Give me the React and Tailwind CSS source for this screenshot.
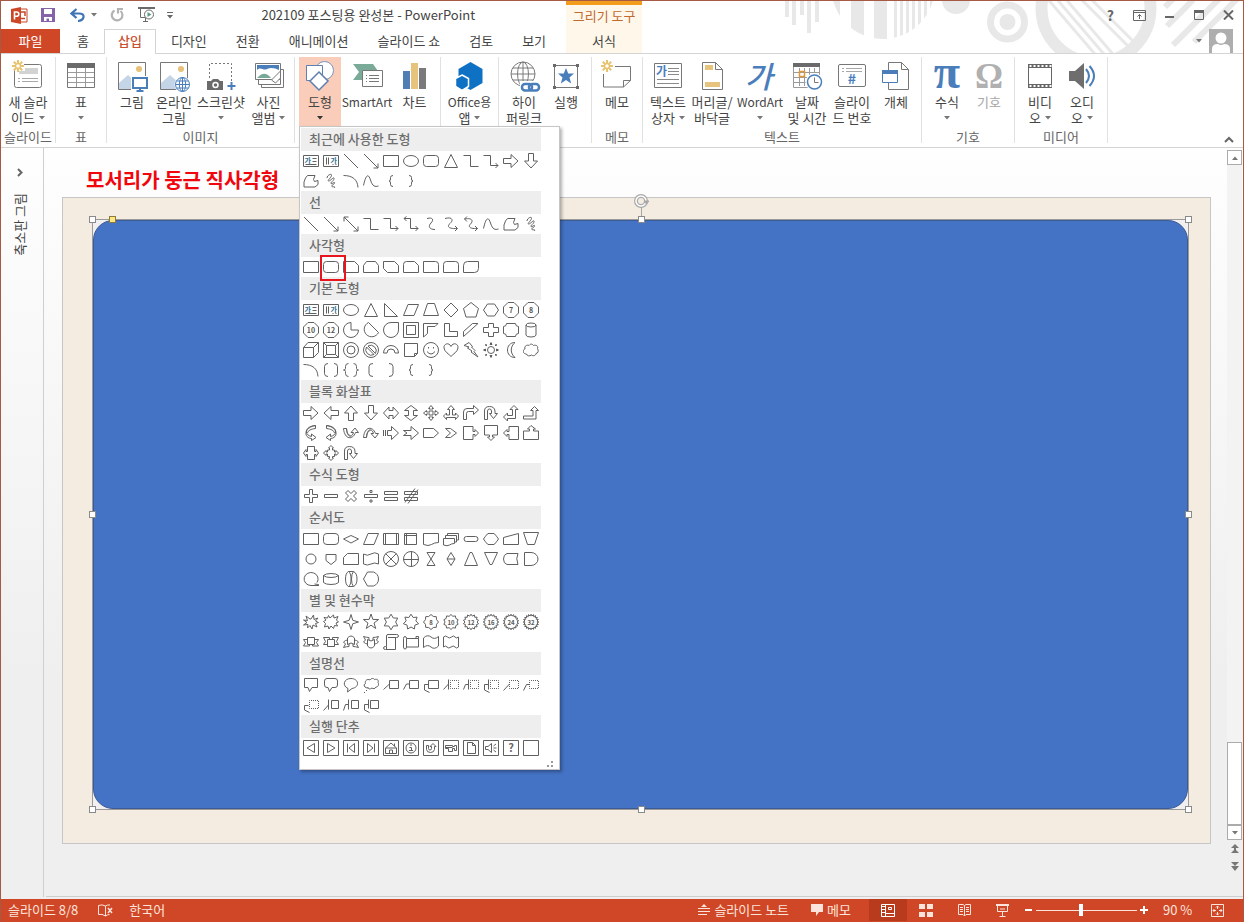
import React, { useState } from 'react';
import clsx from 'clsx';

const BLUE = '#4a7ebb';

/* ---------- shape glyphs, drawn on a 16 x 16 grid ---------- */

const Digits = ({ children, size = 7 }) => (
  <text x="8" y="10.5" textAnchor="middle" fontSize={size} fontWeight="700" fill="#555" stroke="none">
    {children}
  </text>
);

const Framed = ({ children }) => (
  <>
    <path d="M.5 .5h15v15h-15z" />
    {children}
  </>
);

const Dotted = ({ d }) => <path d={d} strokeDasharray="1 1" strokeDashoffset="0.5" />;

const OCTAGON = 'M5 .5h6L15.5 5v6L11 15.5H5L.5 11V5z';

const starPath = (points, outer, inner) => {
  const steps = [];
  for (let i = 0; i < points * 2; i += 1) {
    const r = i % 2 ? inner : outer;
    const a = (Math.PI * i) / points - Math.PI / 2;
    steps.push(`${(8 + r * Math.cos(a)).toFixed(2)} ${(8 + r * Math.sin(a)).toFixed(2)}`);
  }
  return `M${steps.join('L')}z`;
};

const shapes = {
  textBox: (
    <>
      <path d="M.5 2.5h15v11h-15zM9.5 5.5h4M9.5 8.5h4M2.5 11.5h11" />
      <text x="1.5" y="9.5" fontSize="7" fontWeight="700" fill="#2f6f8f" stroke="none">가</text>
    </>
  ),
  textBoxV: (
    <>
      <path d="M.5 2.5h15v11h-15zM3.5 4.5v7M5.5 4.5v7M9.5 11.5h1M12.5 11.5h1" />
      <text x="7.5" y="9.5" fontSize="7" fontWeight="700" fill="#2f6f8f" stroke="none">가</text>
    </>
  ),
  line: 'M1 1L15 15',
  arrow: 'M1 1L15 15M15 10.5V15h-4.5',
  arrow2: 'M1 1L15 15M15 10.5V15h-4.5M5.5 1H1v4.5',
  rect: 'M.5 2.5h15v11h-15z',
  oval: 'M.5 8a7.5 5.5 0 1 0 15 0a7.5 5.5 0 1 0 -15 0z',
  round: 'M3.5 2.5h9q3 0 3 3v5q0 3 -3 3h-9q-3 0 -3 -3v-5q0 -3 3 -3z',
  triangle: 'M8 1.5L14.5 14.5H1.5z',
  elbow: 'M.5 2.5h7v11h8',
  elbowArrow: 'M.5 2.5h7v10h7.5M12.5 10L15 12.5L12.5 15',
  elbowArrow2: 'M1 2.5h6.5v10h7.5M12.5 10L15 12.5L12.5 15M3.5 .5L1 2.5L3.5 5',
  curve: 'M4 2.5c6 -1.500 7 1.500 4 4.500s-2 6.500 4 6.500',
  curveArrow: 'M2 2.500c7 -2 9 1.500 5 5s0 5.500 7 5M12 10L14.500 12.500L12 15',
  curveArrow2: 'M1.500 3c8 -1.500 9 2 6 5s0 5 7 4.500M12 10L14.500 12.500L12 15M4 .500L1.500 3L4 5.500',
  rightArrow: 'M.5 5.500h7.500v-4l7 6.500l-7 6.500v-4H.5z',
  leftArrow: 'M15.500 5.500H8v-4L1 8l7 6.500v-4h7.500z',
  upArrow: 'M5.500 15.500V8h-4L8 1l6.500 7h-4v7.500z',
  downArrow: 'M5.500 .5V8h-4L8 15l6.500 -7h-4V.5z',
  freeform: 'M2.500 5l2 -2.500h7.500l-1.500 4l1 2l3.500 -1v4l-3 2.500H1V9z',
  scribble: 'M4 5c0 -3 5 -5 4.500 -2.500S4 7.500 5.500 8S11 3 11 5.500S7 9.500 8 10.500s4 -2.500 3.500 -.5S7.500 12.500 9 13.500s3 -1 2.500 1.500',
  arc: 'M.5 2.500c9 0 14 4 14.500 12',
  wave: 'M.5 12.500C3 1 5.500 .5 7.500 7s4.500 7 8 6',
  braceL: 'M10 2.500q-2.500 0 -2.500 2v1.500q0 2 -1.500 2q1.500 0 1.500 2v1.500q0 2 2.500 2',
  braceR: 'M6 2.500q2.500 0 2.500 2v1.500q0 2 1.500 2q-1.500 0 -1.500 2v1.500q0 2 -2.500 2',
  snip1: 'M.5 2.500h11l4 4v7h-15z',
  snip2: 'M3.500 2.500h9l3 4v7H.5v-7z',
  snipDiag: 'M.5 2.500h11l4 4v7h-11l-4 -4z',
  snipRound: 'M3.500 2.500h8l4 4v7H.5v-8q0 -3 3 -3z',
  round1: 'M.5 2.500h12q3 0 3 3v8h-15z',
  round2: 'M3.500 2.500h9q3 0 3 3v8H.5v-8q0 -3 3 -3z',
  roundDiag: 'M4.500 2.500h11v7q0 4 -4 4H.5v-7q0 -4 4 -4z',
  rightTri: 'M1.500 1.500v13h13z',
  parallelogram: 'M5 2.500h10.500l-4.500 11H.5z',
  trapezoid: 'M4.500 1.500h7l4 12H.5z',
  diamond: 'M8 1L15 8L8 15L1 8z',
  pentagon: 'M8 .5L15.500 6.500L13 15H3L.5 6.500z',
  hexagon: 'M4.500 2h7l4 6l-4 6h-7L.5 8z',
  hept: <><path d={OCTAGON} /><Digits>7</Digits></>,
  oct: <><path d={OCTAGON} /><Digits>8</Digits></>,
  deca: <><path d={OCTAGON} /><Digits>10</Digits></>,
  dodeca: <><path d={OCTAGON} /><Digits>12</Digits></>,
  pie: 'M8 .5a7.500 7.500 0 1 0 7.500 7.500H8z',
  chord: 'M5.500 .5L15.500 10.500A7.500 7.500 0 1 1 5.500 .5z',
  teardrop: 'M15.500 .5v7.500a7.500 7.500 0 1 1 -7.500 -7.500z',
  frame: 'M.5 .5h15v15h-15zM3.500 3.500h9v9h-9z',
  halfFrame: 'M.5 1.500h14.500l-3 3H4.500v7l-4 3.500z',
  lShape: 'M1.500 1.500h5v8h8v5h-13z',
  stripe: 'M.5 9.500L9.500 1.500h5.500L.5 14.500z',
  cross: 'M5.500 1.500h5v4h5v5h-5v4h-5v-4h-5v-5h5z',
  plaque: 'M3.500 1.500h9q0 3 3 3v7q-3 0 -3 3h-9q0 -3 -3 -3v-7q3 0 3 -3z',
  can: 'M3 3v10q0 2 5 2t5 -2V3q0 -2 -5 -2t-5 2q0 2 5 2t5 -2',
  cube: 'M.5 5.500h10v10h-10zM.5 5.500l4.500 -5h10.500l-5 5M15.500 .5v10l-5 5',
  bevel: 'M.5 .5h15v15h-15zM3.500 3.500h9v9h-9zM.5 .5l3 3M15.500 .5l-3 3M.5 15.500l3 -3M15.500 15.500l-3 -3',
  donut: 'M.5 8a7.500 7.500 0 1 0 15 0a7.500 7.500 0 1 0 -15 0zM4 8a4 4 0 1 0 8 0a4 4 0 1 0 -8 0z',
  noSymbol: 'M.5 8a7.500 7.500 0 1 0 15 0a7.500 7.500 0 1 0 -15 0zM5 4l7.500 7.500a5.500 5.500 0 0 0 -7.500 -7.500zM3.500 5l7.500 7.500a5.500 5.500 0 0 1 -7.500 -7.500z',
  blockArc: 'M.5 11a7.500 7.500 0 0 1 15 0h-3.500a4 4 0 0 0 -8 0z',
  folded: 'M1.500 1.500h13v10l-3 3h-10zM14.500 11.500h-3v3',
  smile: 'M.5 8a7.500 7.500 0 1 0 15 0a7.500 7.500 0 1 0 -15 0zM4 9.500q4 5 8 0M5.500 5v1.500M10.500 5v1.500',
  heart: 'M8 4.500C6 0 .5 1.500 1 6c.5 4 5 6 7 8.500c2 -2.500 6.500 -4.500 7 -8.500c.5 -4.500 -5 -6 -7 -1.500z',
  bolt: 'M1 3.500L6 .5l3.500 4l-1 .5l3.500 3.500l-1 1l4 5.500l-7 -5l1 -1l-4.500 -3l1.500 -1z',
  sun: 'M4.500 8a3.500 3.500 0 1 0 7 0a3.500 3.500 0 1 0 -7 0zM7 2.500L8 .5l1 2zM7 13.500l1 2l1 -2zM2.500 7l-2 1l2 1zM13.500 7l2 1l-2 1zM2.500 2.500l1.500 .5l-1 1zM13.500 2.500l-1.500 .5l1 1zM2.500 13.500l1.500 -.5l-1 -1zM13.500 13.500l-1.500 -.5l1 -1z',
  moon: 'M12 .5c-10 0 -10 15 0 15c-5 -4 -5 -11 0 -15z',
  cloud: 'M3.500 12c-4 0 -4 -4.500 -1.500 -5c-1 -3 2 -4.500 4 -3.500c2 -2.500 4 -1 4.500 0c3 -1 5 1 4 3c1.500 2 .5 5 -1.500 5c0 2 -3 3 -4.500 1.500c-2 1.500 -4.500 1 -5 -1z',
  brackets: 'M5 1.500q-3.500 0 -3.500 3v7q0 3 3.500 3M11 1.500q3.500 0 3.500 3v7q0 3 -3.500 3',
  braces: 'M5.500 1.500q-3 0 -3 3v2q0 1.500 -2 1.500q2 0 2 1.500v2q0 3 3 3M10.500 1.500q3 0 3 3v2q0 1.500 2 1.500q-2 0 -2 1.500v2q0 3 -3 3',
  bracketL: 'M10 1.500q-4 0 -4 3v7q0 3 4 3',
  bracketR: 'M6 1.500q4 0 4 3v7q0 3 -4 3',
  leftRight: 'M.5 8L6 2v3.500h4V2l5.500 6l-5.500 6v-3.500H6V14z',
  upDown: 'M8 .5L14.500 5.500h-4v5h4L8 15.500L1.500 10.500h4v-5h-4z',
  quad: 'M8 .5l2.500 3h-1.500v3.500h3.500v-1.500l3 2.500l-3 2.500v-1.500h-3.500v3.500h1.500l-2.500 3l-2.500 -3h1.500v-3.500h-3.500v1.500l-3 -2.500l3 -2.500v1.500h3.500v-3.500h-1.500z',
  threeWay: 'M8 .5l3.500 4h-2v5.500h3v-2l3 3l-3 3.500v-2h-9v2l-3 -3.500l3 -3v2h3V4.500h-2z',
  bentArrow: 'M.5 14.500V7q0 -3.500 3.500 -3.500h6.500v-3l5 4.500l-5 4.500v-3H5.500q-2 0 -2 2v6z',
  uTurn: 'M1.500 14.500V6q0 -4.500 5 -4.500t5.500 4.500v2.500h2.500l-4 5l-4 -5h2V6q0 -2 -2 -2t-2 2v8.500z',
  leftUp: 'M11 .5l4 4h-2.500v9h-8v2.500l-4 -4l4 -4v2.500h5v-6H7z',
  bentUp: 'M11.500 1.500l4 4h-2.500v8.500H.5v-3h9.500V5.500H7.500z',
  curvedRight: 'M12.500 .5C1 1.500 1 10 8.500 11.500V9l4.500 3.500l-4.500 3v-2C.5 13 .5 2.500 12.500 .5zM12.500 .5v3C8 4 5 5.500 4.500 8',
  curvedLeft: 'M3.500 .5C15 1.500 15 10 7.500 11.500V9L3 12.500l4.500 3v-2C15.500 13 15.500 2.500 3.500 .5zM3.500 .5v3C8 4 11 5.500 11.500 8',
  curvedUp: 'M.5 3.500h3C4 8 5 10 7.500 10.500M.5 3.500C1.500 15 10 15 12.500 7.500h3L12 3L8 7.500h2.500C9 13 4 13 3.500 3.500',
  curvedDown: 'M.5 12.500h3C4 8 5 6 7.500 5.500M.5 12.500C1.500 1 10 1 12.500 8.500h3L12 13L8 8.500h2.500C9 3 4 3 3.500 12.500',
  striped: 'M.5 5v6M2.500 5v6M4.500 5.500h4v-4l7 6.500l-7 6.500v-4h-4z',
  notched: 'M.5 5.500h7.500v-4l7.500 6.500l-7.500 6.500v-4H.5L4 8z',
  homePlate: 'M.5 3.500h10l5 4.500l-5 4.500H.5z',
  chevron: 'M2.500 3.500h5l6 4.500l-6 4.500h-5l5 -4.500z',
  calloutRight: 'M.5 1.500h9.500v5h2v-2l3.500 3.500l-3.500 3.500v-2h-2v5H.5z',
  calloutDown: 'M1.500 .5h13v9.500h-5v2h2l-3.500 3.500l-3.500 -3.500h2v-2h-5z',
  calloutLeft: 'M15.500 1.500H6v5H4v-2L.5 8L4 11.500v-2h2v5h9.500z',
  calloutUp: 'M.5 14.500h15V6h-5V4h2L8 .5L4.500 4h2v2h-6z',
  calloutLR: 'M4.500 1.500h7v5h1.500v-2l2.500 3.500l-2.500 3.500v-2h-1.500v5h-7v-5H3v2L.5 8L3 4.500v2h1.500z',
  calloutQuad: 'M8 .5l2.500 2.500h-1v2h2v2h1.500v-1.500L15.500 8L13 10.500V9h-1.500v2.500h-2v1.500h1L8 15.500L5.500 13h1v-1.500h-2V9H3v1.500L.5 8L3 5.500V7h1.500V5h2V3h-1z',
  mathPlus: 'M6.500 1.500h3v5h5v3h-5v5h-3v-5h-5v-3h5z',
  mathMinus: 'M1.500 6.500h13v3h-13z',
  mathTimes: 'M5 2.500L8 5.500l3 -3L13.500 5l-3 3l3 3L11 13.500l-3 -3l-3 3L2.500 11l3 -3l-3 -3z',
  mathDivide: 'M1.500 6.500h13v3h-13zM7 2.500h2v2H7zM7 12h2v2H7z',
  mathEqual: 'M1.500 3.500h13v3h-13zM1.500 9.500h13v3h-13z',
  mathNotEqual: 'M1.500 3.500h13v3h-13zM1.500 9.500h13v3h-13zM12 .5L2 14.500M15 1.500L5 15.500',
  flowAlt: 'M4 2.500h8q3.500 0 3.500 3v5q0 3 -3.500 3H4q-3.500 0 -3.500 -3v-5q0 -3 3.500 -3z',
  decision: 'M8 4.500L15.500 8L8 12L.5 8z',
  predefined: 'M.5 2.500h15v11h-15zM2.500 2.500v11M13.500 2.500v11',
  internal: 'M1.500 2.500h12v11h-12zM1.500 4.500h12M3.500 2.500v11',
  document: 'M.5 2.500h15v9q-4 0 -7 2t-8 0z',
  multiDoc: 'M.5 7.500h11v5q-3 0 -5 1.500t-6 0zM2.500 7V4.500h11v6.500H12M4.500 4V2.500h11v6.500H14',
  terminator: 'M3.500 5.500h9a2.500 2.500 0 0 1 0 5h-9a2.500 2.500 0 0 1 0 -5z',
  preparation: 'M5 2.500h6q1 .5 4.500 5.500q-3.500 5 -4.500 5.500H5q-1 -.5 -4.500 -5.500q3.500 -5 4.500 -5.500z',
  manualInput: 'M.5 6.500L15.500 2.500v11H.5z',
  manualOp: 'M.5 1.500h15l-4 12h-7z',
  connector: 'M3 8a5 5 0 1 0 10 0a5 5 0 1 0 -10 0z',
  offPage: 'M3 3.500h10v6l-5 4l-5 -4z',
  card: 'M4.500 2.500h11v11H.5v-7z',
  tape: 'M.5 3q4 2.500 7.500 0t7.500 0v10q-4 -2 -7.500 0t-7.500 0z',
  summing: 'M.5 8a7.500 7.500 0 1 0 15 0a7.500 7.500 0 1 0 -15 0zM2.500 2.500l11 11M13.500 2.500l-11 11',
  orJoin: 'M.5 8a7.500 7.500 0 1 0 15 0a7.500 7.500 0 1 0 -15 0zM.5 8.500h15M8.500 .5v15',
  collate: 'M4 1.500h8L4 14.500h8z',
  sort: 'M8 1.500l4 6.500l-4 6.500L4 8zM4 8h8',
  extract: 'M7 1.500h2l5.500 13h-13z',
  merge: 'M1.500 1.500h13l-5.500 12H7z',
  stored: 'M4 2.500h11q-2.500 5 0 11H4q-3.500 -1 -3.500 -5.500T4 2.500z',
  delay: 'M1.500 1.500H8a7 6.500 0 0 1 0 13H1.500z',
  seqAccess: 'M15.500 14.500H8a7 6.500 0 1 1 6 -3M11.500 13l4 .500v1.500',
  magDisk: 'M.5 4.500v7q2 2 7.500 2t7.500 -2v-7q-2 -2 -7.500 -2t-7.500 2q2 2 7.500 2t7.500 -2',
  directAccess: 'M5.500 .5h5q3.500 1.500 3.500 7.500t-3.500 7.500h-5Q2.500 14 2.500 8T5.500 .5q2.500 1.500 2.500 7.500t-2.500 7.500M10.500 .5q-2 2 -2 7.500t2 7.500',
  display: 'M4.500 1h6q5 2 5 7t-5 7h-6L.5 8z',
  burst1: 'M8 5l2.500 -4l.5 4.500l4 -1.500l-2.500 3l3 1.500l-3 1l1.500 3.500l-4 -2L9 15l-2 -3.500L4.500 14l.5 -3.500l-4.500 .5L4 8.500L.5 6l4 .5L3 2l4 3z',
  burst2: 'M7 4l3.500 -3l.5 3l4 -1.500l-1.500 3.500l2 2l-2.500 1l1.500 3l-3 -.5l-1 3l-2.500 -2.500L6 15l-1 -3l-3.500 1l1 -3.500l-2 -2L3 6L1 3.500l3.500 .5L5.500 1.500z',
  star4: starPath(4, 7.5, 2.5),
  star5: starPath(5, 8, 3.2),
  star6: starPath(6, 7.8, 4.6),
  star7: starPath(7, 7.8, 5),
  star8: <><path d={starPath(8, 7.5, 6)} /><Digits size={6}>8</Digits></>,
  star10: <><path d={starPath(10, 7.5, 6)} /><Digits size={6}>10</Digits></>,
  star12: <><path d={starPath(14, 7.8, 6)} /><Digits size={6}>12</Digits></>,
  star16: <><path d={starPath(16, 7.8, 6)} /><Digits size={6}>16</Digits></>,
  star24: <><path d={starPath(18, 7.8, 6)} /><Digits size={6}>24</Digits></>,
  star32: <><path d={starPath(20, 7.8, 6)} /><Digits size={6}>32</Digits></>,
  ribbonUp: 'M4.500 3.500h7v7h-7zM4.500 5.500h-4l2 3l-2 3.500h6v-1.500M11.500 5.500h4l-2 3l2 3.500h-6v-1.500',
  ribbonDown: 'M4.500 5.500h7v7h-7zM4.500 10.500h-4l2 -3l-2 -4h6v2M11.500 10.500h4l-2 -3l2 -4h-6v2',
  curvedRibbonUp: 'M4.500 10.500V4q3.500 -4 7 0v6.500q-3.500 -3 -7 0zM4.500 6q-2 0 -4 2l2 2l-2 3.500q3 -1 5.500 -1v-2.500M11.500 6q2 0 4 2l-2 2l2 3.500q-3 -1 -5.500 -1v-2.500',
  curvedRibbonDown: 'M4.500 5.500V12q3.500 4 7 0V5.500q-3.500 3 -7 0zM4.500 10q-2 0 -4 -2l2 -2l-2 -3.500q3 1 5.500 1v2.500M11.500 10q2 0 4 -2l-2 -2l2 -3.500q-3 1 -5.500 1v2.500',
  vScroll: 'M4.500 .5h9q2 0 2 1.500t-2 1.500h-1v12h-10q-2 0 -2 -1.500t2 -1.500h1V2q0 -1.500 1.500 -1.500M5 3.500h8M3.500 12.500v3',
  hScroll: 'M.5 4.500q0 -2 1.500 -2t1.500 2h12v8.500h-12q0 2 -1.500 2T.5 13zM3.500 4.500v8.500M13 4.500v-2h2.500v2',
  waveShape: 'M.5 4q4 -4 7.500 -1t7.500 -.5v9.500q-4 4 -7.500 1t-7.500 .5z',
  doubleWave: 'M.5 3q2.500 -2 4 0t4 0t3.500 0t3.500 0v10q-2 2 -3.500 0t-4 0t-4 0t-3.500 0z',
  rectCallout: 'M1.500 1.500h13v9H9l-2.500 4L5 10.500H1.500z',
  roundCallout: 'M4 1.500h8q2.500 0 2.500 2.500v4q0 2.500 -2.500 2.500H9L6.500 14.500L5 10.500H4Q1.500 10.500 1.500 8V4Q1.500 1.500 4 1.500z',
  ovalCallout: 'M4.500 15l.5 -3.500C-1 9 .5 1.500 8 1.500s9.500 8.500 1 10z',
  cloudCallout: 'M5 11c-4 0 -5 -3.500 -2.500 -4.500c-1 -3 2 -5 4.500 -3.500c2 -2.500 4 -1.500 4.500 -.5c3 -1 4.500 1 3.500 3c1.500 2 0 4.500 -2 4.500c-1 2 -3 2 -4 1c-2 1.500 -4 1 -4 -.5zM3 13.500h1M1 15.500h1',
  line1: 'M6.500 3.500h9v8h-9zM6.500 7L.5 12.500',
  line2: 'M6.500 3.500h9v8h-9zM6.500 7h-3L.5 12.500',
  line3: 'M5.500 3.500h10v8h-10zM5.500 7.500h-4v5.500l5 2.500',
  accent1: <><Dotted d="M7.500 3.500h8v8h-8z" /><path d="M5.500 2.500v10M5.500 7L.5 12.500" /></>,
  accent2: <><Dotted d="M7.500 3.500h8v8h-8z" /><path d="M5.500 2.500v10M5.500 7.500h-3L.5 12.500" /></>,
  accent3: <><Dotted d="M7.500 3.500h8v8h-8z" /><path d="M5.500 2.500v10M5.500 7.500h-4v5.500l5 2.500" /></>,
  plain1: <><Dotted d="M6.500 3.500h9v8h-9z" /><path d="M6.500 7L.5 13.500" /></>,
  plain2: <><Dotted d="M6.500 3.500h9v8h-9z" /><path d="M6.500 7.500h-3L.5 13.500" /></>,
  plain3: <><Dotted d="M6.500 3.500h9v8h-9z" /><path d="M5.500 8.500h-4v4.500l5 2.500" /></>,
  bar1: 'M8.500 3.500h7v8h-7zM5.500 2.500v10M5.500 8L.5 13.500',
  bar2: 'M8.500 3.500h7v8h-7zM5.500 2.500v10M5.500 7.500h-3l-2 6',
  bar3: 'M7.500 3.500h8v8h-8zM5.500 2.500v9M5.500 7.500h-4v5.500l5 2.500',
  actBack: <Framed><path d="M11.500 3.500v9L4 8z" /></Framed>,
  actNext: <Framed><path d="M4.500 3.500v9L12 8z" /></Framed>,
  actStart: <Framed><path d="M11.500 3.500v9L6 8zM4.500 3.500v9" /></Framed>,
  actEnd: <Framed><path d="M4.500 3.500v9L10 8zM11.500 3.500v9" /></Framed>,
  actHome: <Framed><path d="M2.500 8L8 3l5.500 5v5.500h-11zM2.500 8h11M6.500 13v-3h3v3M11.500 6V3.500" /></Framed>,
  actInfo: (
    <Framed>
      <path d="M3 8a5 5 0 1 0 10 0a5 5 0 1 0 -10 0z" />
      <path d="M7 5h2M6.500 7.500h2v3M6 10.500h4" />
    </Framed>
  ),
  actReturn: <Framed><path d="M3.500 5.500h2v3q0 1.500 1.500 1.500t1.500 -1.500v-2h-1.500l3 -3l3 3h-1.500v3q-.5 3 -4 3t-4 -3z" /></Framed>,
  actMovie: <Framed><path d="M2.500 5.500h7v1h2v-1h2v5h-2v-2h-2v3h-4v-3h-3zM2.500 7.500h7" /></Framed>,
  actDoc: <Framed><path d="M4.500 2.500h5l3 3v8h-8zM9.500 2.500v3h3" /></Framed>,
  actSound: <Framed><path d="M2.500 6.500h2.500l3.500 -3v9L5 9.500H2.500zM10.500 6l2.500 -2M10.500 8h3M10.500 10l2.500 2" /></Framed>,
  actHelp: (
    <Framed>
      <text x="8" y="12" textAnchor="middle" fontSize="11" fontWeight="700" fill="#666" stroke="none">?</text>
    </Framed>
  ),
  actBlank: <Framed />,
};

const sections = [
  { title: '최근에 사용한 도형', items: 'textBox textBoxV line arrow rect oval round triangle elbow elbowArrow rightArrow downArrow freeform scribble arc wave braceL braceR' },
  { title: '선', items: 'line arrow arrow2 elbow elbowArrow elbowArrow2 curve curveArrow curveArrow2 wave freeform scribble' },
  { title: '사각형', items: 'rect round snip1 snip2 snipDiag snipRound round1 round2 roundDiag', marked: 'round' },
  { title: '기본 도형', items: 'textBox textBoxV oval triangle rightTri parallelogram trapezoid diamond pentagon hexagon hept oct deca dodeca pie chord teardrop frame halfFrame lShape stripe cross plaque can cube bevel donut noSymbol blockArc folded smile heart bolt sun moon cloud arc brackets braces bracketL bracketR braceL braceR' },
  { title: '블록 화살표', items: 'rightArrow leftArrow upArrow downArrow leftRight upDown quad threeWay bentArrow uTurn leftUp bentUp curvedRight curvedLeft curvedUp curvedDown striped notched homePlate chevron calloutRight calloutDown calloutLeft calloutUp calloutLR calloutQuad uTurn' },
  { title: '수식 도형', items: 'mathPlus mathMinus mathTimes mathDivide mathEqual mathNotEqual' },
  { title: '순서도', items: 'rect flowAlt decision parallelogram predefined internal document multiDoc terminator preparation manualInput manualOp connector offPage card tape summing orJoin collate sort extract merge stored delay seqAccess magDisk directAccess display' },
  { title: '별 및 현수막', items: 'burst1 burst2 star4 star5 star6 star7 star8 star10 star12 star16 star24 star32 ribbonUp ribbonDown curvedRibbonUp curvedRibbonDown vScroll hScroll waveShape doubleWave' },
  { title: '설명선', items: 'rectCallout roundCallout ovalCallout cloudCallout line1 line2 line3 accent1 accent2 accent3 plain1 plain2 plain3 bar1 bar2 bar3' },
  { title: '실행 단추', items: 'actBack actNext actStart actEnd actHome actInfo actReturn actMovie actDoc actSound actHelp actBlank' },
];

function ShapeIcon({ name }) {
  const glyph = shapes[name];
  return (
    <svg width="16" height="16" viewBox="0 0 16 16" fill="none" stroke="#606060" strokeWidth="1">
      {typeof glyph === 'string' ? <path d={glyph} /> : glyph}
    </svg>
  );
}

function ShapeMenu() {
  return (
    <div className="absolute left-0 top-full z-20 w-[261px] -mt-px border border-[#c6c6c6] bg-white p-px text-left shadow-[2px_2px_3px_rgba(0,0,0,0.3)]">
      {sections.map(({ title, items, marked }) => (
        <section key={title} className="w-[240px]">
          <h3 className="h-[23px] bg-[#eeeeee] pl-2 text-[13px] font-medium leading-[22px] text-[#6e6e6e]">{title}</h3>
          <div className="grid grid-cols-12">
            {items.split(' ').map((name) => (
              <button key={name} type="button" aria-label={name} className="relative flex h-5 items-center justify-center">
                <ShapeIcon name={name} />
                {name === marked && (
                  <span className="absolute -left-px -top-[2px] z-10 h-[26px] w-[26px] border-2 border-[#e8161c]" />
                )}
              </button>
            ))}
          </div>
        </section>
      ))}
      <div className="flex h-[10px] items-end justify-end pr-1">
        <svg width="8" height="8" viewBox="0 0 8 8" fill="#9a9a9a">
          <path d="M5 1h2v2H5zM1 5h2v2H1zM5 5h2v2H5z" />
        </svg>
      </div>
    </div>
  );
}

/* ---------- ribbon icons, drawn on a 32 x 32 grid ---------- */

const Spark = () => (
  <g stroke="#e8c36f" strokeWidth="2" fill="none">
    <circle cx="6" cy="6" r="2.5" strokeWidth="1.500" />
    <path d="M6 0v3M6 9v3M0 6h3M9 6h3M1.800 1.800l2 2M8.200 8.200l2 2M10.200 1.800l-2 2M3.800 8.200l-2 2" />
  </g>
);

const Photo = () => (
  <>
    <path d="M2.500 2.500h27v27h-27z" fill="#fff" />
    <path d="M3 29v-6l9 -8l9 8l4 6z" fill="#c5d5e8" stroke="none" />
    <circle cx="23" cy="9" r="3" fill="#e8c078" stroke="none" />
  </>
);

const Globe = ({ cx, cy, r, stroke }) => (
  <g stroke={stroke} fill="none">
    <circle cx={cx} cy={cy} r={r} fill="#fff" />
    <ellipse cx={cx} cy={cy} rx={r / 2.2} ry={r} />
    <path d={`M${cx} ${cy - r}v${r * 2}M${cx - r} ${cy}h${r * 2}M${cx - r * 0.85} ${cy - r / 2}h${r * 1.7}M${cx - r * 0.85} ${cy + r / 2}h${r * 1.7}`} />
  </g>
);

const ribbonIcons = {
  newSlide: (
    <>
      <rect x="2.500" y="4.500" width="27" height="23" rx="2" fill="#fff" />
      <path d="M0 0h12v10H0z" fill="#fff" stroke="none" />
      <path d="M13 8h13v6H7v-3h6z" fill="#d3d3d3" stroke="none" />
      <path d="M6 18.500h2M10 18.500h16M6 21.500h2M10 21.500h16" stroke="#a8a8a8" />
      <Spark />
    </>
  ),
  table: (
    <>
      <path d="M2.500 3.500h27v24h-27z" fill="#fff" />
      <path d="M2 3h28v5H2z" fill="#6a6a6a" stroke="none" />
      <path d="M11.500 8v19M20.500 8v19M3 12.500h26M3 17.500h26M3 22.500h26" stroke="#9a9a9a" />
    </>
  ),
  picture: (
    <>
      <Photo />
      <path d="M15 16h17v16H15z" fill="#fff" stroke="none" />
      <path d="M17 18h14v10H17zM24 28v2.500M20.500 31h7" stroke={BLUE} strokeWidth="2" />
    </>
  ),
  onlinePicture: (
    <>
      <Photo />
      <circle cx="24.500" cy="24.500" r="8" fill="#fff" stroke="none" />
      <Globe cx={24.5} cy={24.5} r={7} stroke={BLUE} />
    </>
  ),
  screenshot: (
    <>
      <path d="M4.500 18V3.500h22V22" strokeDasharray="2 2" />
      <path d="M2 21h4l2 -2h5l2 2h3v9H2z" fill="#6a6a6a" stroke="none" />
      <circle cx="10.500" cy="25" r="2.500" stroke="#fff" strokeWidth="1.500" />
      <path d="M26.500 22v8M22.500 26h8" stroke={BLUE} strokeWidth="2" />
    </>
  ),
  album: (
    <>
      <path d="M8.500 9.500h22v18h-22z" fill="#fff" />
      <path d="M5.500 6.500h22v18h-22z" fill="#fff" />
      <path d="M2.500 3.500h25v16h-25z" fill="#fff" />
      <path d="M4 5h22v13H4z" fill={BLUE} stroke="none" />
      <path d="M4 10c4 -4 6 1 10 -1s8 -1 12 1v8H4z" fill="#fff" stroke="none" />
      <path d="M4 18c5 -5 9 -6 14 0z" fill="#77a898" stroke="none" />
      <path d="M18.500 20l9 -9v7l-5 5z" fill="#fff" />
    </>
  ),
  shapes: (
    <>
      <circle cx="20.500" cy="10.500" r="9" fill="#fff" stroke="#7b96bb" />
      <path d="M2.500 5.500h16v15h-16z" fill="#fff" stroke="#5f7fae" />
      <path d="M15 12l9 9l-9 9l-9 -9z" fill="#fff" stroke="#5f7fae" strokeWidth="1.500" />
    </>
  ),
  smartArt: (
    <>
      <path d="M2 4h20l5 7l-5 9H2l6 -8z" fill="#7aab98" stroke="none" />
      <path d="M11.500 10.500h20v16h-20z" fill="#fff" />
      <path d="M15 15.500h1M18 15.500h10M15 18.500h1M18 18.500h10M15 21.500h1M18 21.500h10" />
    </>
  ),
  chart: (
    <g stroke="none">
      <path d="M4 11h7v18H4z" fill="#4f7fb5" />
      <path d="M12 3h7v26h-7z" fill="#e6c47e" />
      <path d="M20 8h7v21h-7z" fill="#7a7a7a" />
    </g>
  ),
  office: (
    <>
      <path d="M16.500 2l12 7v14l-12 7l-12 -7V9z" fill="#0f71c4" stroke="none" />
      <path d="M8 15l6.500 3.500v8L8 30.500l-6.500 -4v-8z" fill="#0f71c4" stroke="#fff" strokeWidth="1.500" />
    </>
  ),
  hyperlink: (
    <>
      <Globe cx={15} cy={14} r={12} stroke="#7a7a7a" />
      <path d="M12 21h20v11H12z" fill="#fff" stroke="none" />
      <g stroke={BLUE} strokeWidth="2.500">
        <rect x="14" y="24" width="10" height="6.500" rx="3" />
        <rect x="21" y="24" width="10" height="6.500" rx="3" />
      </g>
    </>
  ),
  action: (
    <>
      <path d="M4.500 5.500h23v22h-23z" />
      <path d="M3 4h3v3H3zM26 4h3v3h-3zM3 26h3v3H3zM26 26h3v3h-3z" fill="#6a6a6a" stroke="none" />
      <path d="M16 8l2.200 5.500H24l-4.500 4l1.700 6L16 20l-5.200 3.500l1.700 -6L8 13.500h5.800z" fill={BLUE} stroke="none" />
    </>
  ),
  memo: (
    <>
      <path d="M14 6.500h15.500v14l-7 6.500h-20V14M29.500 20.500h-7V27" />
      <Spark />
    </>
  ),
  textBox: (
    <>
      <path d="M2.500 3.500h27v24h-27z" fill="#fff" />
      <path d="M16 8.500h11M16 11.500h11M16 14.500h11M5 19.500h22M5 23.500h22" stroke="#8a8a8a" />
      <text x="4" y="16" fontSize="12" fontWeight="700" fill={BLUE} stroke="none">가</text>
    </>
  ),
  headerFooter: (
    <>
      <path d="M6.500 2.500h13l7 7v20h-20zM19.500 2.500v7h7" fill="#fff" />
      <path d="M9 5h8v5H9zM9 22h15v5H9z" fill="#e6c47e" stroke="none" />
    </>
  ),
  wordArt: (
    <text x="1" y="28" fontSize="30" fontStyle="italic" fontWeight="500" fill={BLUE} stroke="none">가</text>
  ),
  dateTime: (
    <>
      <path d="M2.500 3.500h26v24h-26zM8.500 8v18M13.500 8v18M18.500 8v18M23.500 8v18M3 12.500h25M3 17.500h25M3 22.500h25" stroke="#9a9a9a" />
      <path d="M2 3h27v4H2z" fill="#6a6a6a" stroke="none" />
      <path d="M8.500 11.500h5v5h-5z" stroke="#e0963c" strokeWidth="1.500" />
      <circle cx="23.500" cy="22" r="9" fill="#fff" stroke="none" />
      <circle cx="23.500" cy="22" r="7" fill="#fff" stroke={BLUE} strokeWidth="1.500" />
      <path d="M23.500 17.500v5h4" />
    </>
  ),
  slideNumber: (
    <>
      <rect x="2.500" y="4.500" width="27" height="22" rx="1.500" fill="#fff" />
      <path d="M6 8.500h2M10 8.500h16M6 11.500h2M10 11.500h16" stroke="#a8a8a8" />
      <text x="16" y="24" textAnchor="middle" fontSize="14" fontWeight="700" fill={BLUE} stroke="none">#</text>
    </>
  ),
  object: (
    <>
      <path d="M8.500 2.500h13l7 7v20h-20zM21.500 2.500v7h7" fill="#fff" />
      <path d="M2.500 10.500h15v12h-15z" fill="#fff" stroke={BLUE} />
      <path d="M2 10h16v4H2z" fill={BLUE} stroke="none" />
    </>
  ),
  equation: (
    <text x="16" y="28" textAnchor="middle" fontSize="48" fontWeight="700" fill={BLUE} stroke="none" className="font-['Liberation_Serif',serif]">π</text>
  ),
  symbol: (
    <text x="16" y="28" textAnchor="middle" fontSize="35" fontWeight="700" fill="#b0b0b0" stroke="none" className="font-['Liberation_Serif',serif]">Ω</text>
  ),
  video: (
    <>
      <path d="M4 4h24v24H4z" fill="#666" stroke="none" />
      <path d="M5 8h22v16H5z" fill="#fff" stroke="none" />
      <path d="M5.500 6h22M5.500 26h22" stroke="#fff" strokeWidth="2" strokeDasharray="2 2" />
    </>
  ),
  audio: (
    <>
      <path d="M3 11h6l9 -8v26l-9 -8H3z" fill="#6e6e6e" stroke="none" />
      <path d="M20 9q6 7 0 14M23.500 6q9 10 0 20" stroke={BLUE} strokeWidth="2" />
    </>
  ),
};

const Caret = ({ className }) => (
  <svg width="6" height="4" viewBox="0 0 6 4" fill="currentColor" className={clsx('inline-block', className)}>
    <path d="M0 0h6L3 3.500z" />
  </svg>
);

// label is one or two lines; caret sits after the second line, or alone on it.
// Groups without a title sit behind the open shape menu.
const groups = [
  { title: '슬라이드', items: [{ icon: 'newSlide', label: ['새 슬라', '이드'], caret: true, width: 'w-[46px]' }] },
  { title: '표', items: [{ icon: 'table', label: ['표', ''], caret: true, width: 'w-[42px]' }] },
  {
    title: '이미지',
    items: [
      { icon: 'picture', label: ['그림'], width: 'w-[42px]' },
      { icon: 'onlinePicture', label: ['온라인', '그림'], width: 'w-[42px]' },
      { icon: 'screenshot', label: ['스크린샷', ''], caret: true, width: 'w-[52px]' },
      { icon: 'album', label: ['사진', '앨범'], caret: true, width: 'w-[43px]' },
    ],
  },
  {
    items: [
      { icon: 'shapes', label: ['도형', ''], caret: true, width: 'w-[42px]', menu: true },
      { icon: 'smartArt', label: ['SmartArt'], width: 'w-[52px]', small: true },
      { icon: 'chart', label: ['차트'], width: 'w-[43px]' },
    ],
  },
  { items: [{ icon: 'office', label: ['Office용', '앱'], caret: true, width: 'w-[49px]', small: true }] },
  {
    items: [
      { icon: 'hyperlink', label: ['하이', '퍼링크'], width: 'w-[42px]' },
      { icon: 'action', label: ['실행'], width: 'w-[42px]' },
    ],
  },
  { title: '메모', items: [{ icon: 'memo', label: ['메모'], width: 'w-[42px]' }] },
  {
    title: '텍스트',
    items: [
      { icon: 'textBox', label: ['텍스트', '상자'], caret: true, width: 'w-[42px]' },
      { icon: 'headerFooter', label: ['머리글/', '바닥글'], width: 'w-[46px]' },
      { icon: 'wordArt', label: ['WordArt', ''], caret: true, width: 'w-[50px]', small: true },
      { icon: 'dateTime', label: ['날짜', '및 시간'], width: 'w-[44px]' },
      { icon: 'slideNumber', label: ['슬라이', '드 번호'], width: 'w-[46px]' },
      { icon: 'object', label: ['개체'], width: 'w-[42px]' },
    ],
  },
  {
    title: '기호',
    items: [
      { icon: 'equation', label: ['수식', ''], caret: true, width: 'w-[42px]' },
      { icon: 'symbol', label: ['기호'], width: 'w-[42px]', disabled: true },
    ],
  },
  {
    title: '미디어',
    items: [
      { icon: 'video', label: ['비디', '오'], caret: true, width: 'w-[42px]' },
      { icon: 'audio', label: ['오디', '오'], caret: true, width: 'w-[42px]' },
    ],
  },
];

function RibbonButton({ icon, label, caret, width, menu, disabled, small, open, onToggle }) {
  const [first, second] = label;
  return (
    <div className={clsx('relative shrink-0', width)}>
      <button
        type="button"
        disabled={disabled}
        onClick={menu ? onToggle : undefined}
        className={clsx('flex h-[70px] w-full flex-col items-center pt-[3px]', open && 'bg-[#f9cdb9]', disabled ? 'text-[#a6a6a6]' : 'text-[#444444]')}
      >
        <svg width="32" height="32" viewBox="0 0 32 32" fill="none" stroke="#777" className="shrink-0 overflow-visible">
          {ribbonIcons[icon]}
        </svg>
        <span className={clsx('mt-[2px] whitespace-nowrap', small ? 'text-[12px] leading-4' : 'leading-4')}>{first}</span>
        <span className="flex h-4 items-center gap-1 whitespace-nowrap leading-4">
          {second}
          {caret && <Caret className={open ? 'text-[#333]' : 'text-[#777]'} />}
        </span>
      </button>
      {menu && open && <ShapeMenu />}
    </div>
  );
}

function Ribbon() {
  const [open, setOpen] = useState(true);
  return (
    <div className="relative z-10 flex h-[94px] shrink-0 border-b border-[#d4d4d4] bg-white pt-[3px]">
      {groups.map(({ title, items }) => (
        <div key={items[0].icon} className="flex h-[86px] shrink-0 flex-col border-r border-[#e1e1e1] px-1">
          <div className="flex justify-center">
            {items.map((item) => (
              <RibbonButton key={item.icon} {...item} open={item.menu && open} onToggle={() => setOpen(!open)} />
            ))}
          </div>
          {title && <div className="mt-[2px] -mx-1 whitespace-nowrap text-center leading-4 text-[#666666]">{title}</div>}
        </div>
      ))}
      <button type="button" aria-label="리본 메뉴 축소" className="mb-[3px] ml-auto mr-[9px] self-end">
        <svg width="10" height="8" viewBox="0 0 10 8" fill="none" stroke="#666" strokeWidth="2"><path d="M1 6l4 -4l4 4" /></svg>
      </button>
    </div>
  );
}

/* ---------- title bar and tabs ---------- */

function QuickAccess() {
  return (
    <div className="flex items-center text-[#777]">
      <svg width="17" height="17" viewBox="0 0 17 17" className="mr-[13px]" aria-hidden="true">
        <path d="M9 2h7v13H9z" fill="#fff" stroke="#c9452a" />
        <path d="M10 5h4v4M10 11.500h4" fill="none" stroke="#c9452a" strokeWidth="1.500" />
        <path d="M0 2L10 0v17L0 15z" fill="#cb4727" />
        <path d="M3.500 12.500V5h2.200a2 2 0 0 1 0 4.300H3.500" fill="none" stroke="#fff" strokeWidth="1.600" />
      </svg>
      <button type="button" aria-label="저장" className="mr-[15px]">
        <svg width="14" height="14" viewBox="0 0 14 14">
          <path d="M0 0h14v14H0z" fill="#8862a8" />
          <path d="M3 1h8v5H3zM3 9h8v4H8v-2.500H5.500V13H3z" fill="#fff" />
        </svg>
      </button>
      <button type="button" aria-label="실행 취소" className="mr-[6px]">
        <svg width="15" height="14" viewBox="0 0 15 14" fill="none" stroke="#3f74b5" strokeWidth="2.200">
          <path d="M6.500 1L1.500 5.500L6.500 10M2 5.500h7q5 0 4.500 3.500t-5.500 4" />
        </svg>
      </button>
      <Caret />
      <button type="button" aria-label="다시 실행" className="ml-[13px] mr-[14px]">
        <svg width="14" height="14" viewBox="0 0 14 14" fill="none" stroke="#b3b3b3" strokeWidth="2.200">
          <path d="M4.500 2.500a5.300 5.300 0 1 0 6 .5M8 5.500V1h5" />
        </svg>
      </button>
      <button type="button" aria-label="처음부터 시작" className="mr-3">
        <svg width="17" height="16" viewBox="0 0 17 16" fill="none" stroke="#6a6a6a">
          <path d="M0 1h17" strokeWidth="2" />
          <path d="M2.500 2v8.500h5M5 14.500h5M7.500 11v4" />
          <circle cx="11" cy="7.500" r="4.500" fill="#fff" />
          <path d="M9.500 5v5l4 -2.500z" fill="#5b9b80" stroke="none" />
        </svg>
      </button>
      <button type="button" aria-label="빠른 실행 도구 모음">
        <svg width="6" height="7" viewBox="0 0 6 7" fill="#666"><path d="M0 0h6v1H0zM0 3h6L3 6.500z" /></svg>
      </button>
    </div>
  );
}

const tabs = ['홈', '삽입', '디자인', '전환', '애니메이션', '슬라이드 쇼', '검토', '보기'];

// soft grey circles and stripes behind the window controls
function HeaderArt() {
  return (
    <svg width="601" height="52" viewBox="642 1 601 52" className="absolute bottom-0 right-0" fill="none" stroke="#e8e8e8" aria-hidden="true">
      <defs>
        <clipPath id="disc"><circle cx="883" cy="-12.500" r="51.500" /></clipPath>
        <clipPath id="ring"><circle cx="1096" cy="8" r="49" /></clipPath>
      </defs>
      <g fill="#e8e8e8" stroke="none">
        <path d="M785 0h4v17h-4zM792 0h4v25h-4zM800 0h4v15h-4zM807 0h4v33h-4zM815 0h4v22h-4z" />
        <g clipPath="url(#disc)">
          <path d="M832 0h8v40h-8zM851 0h13v40h-13zM874 0h13v40h-13zM894 0h3v40h-3zM900 0h3v40h-3zM906 0h3v40h-3zM912 0h3v40h-3zM918 0h3v40h-3zM924 0h3v40h-3zM930 0h3v40h-3z" />
        </g>
        <circle cx="956" cy="0" r="14" />
      </g>
      <circle cx="1007.500" cy="22" r="17" strokeWidth="7" />
      <circle cx="1007.500" cy="22" r="8" fill="#e8e8e8" stroke="none" />
      <circle cx="1096" cy="8" r="54.500" strokeWidth="12" />
      <g clipPath="url(#ring)">
        <path d="M1040 -10l60 70M1049 -10l60 70M1058 -10l60 70" strokeWidth="3" />
        <path d="M1072 -10l60 60M1082 -10l60 60" strokeWidth="3" />
      </g>
      <path d="M1165 7l8 -8M1167 26l26 -26M1173 45l47 -47M1194 42l43 -43" strokeWidth="6" />
    </svg>
  );
}

function Header() {
  return (
    <header className="flex h-[53px] shrink-0 border-b border-[#d4d4d4] bg-white">
      <div className="flex shrink-0 flex-col">
        <div className="flex h-7 items-center pl-[10px]">
          <QuickAccess />
          <h1 className="ml-auto mr-[85px] text-[13px] text-[#444]">202109 포스팅용 완성본 - PowerPoint</h1>
        </div>
        <nav className="flex h-6">
          <button type="button" className="mr-[3px] w-[59px] bg-[#d04727] text-white">파일</button>
          <div className="flex gap-px">
            {tabs.map((tab) => (
              <button
                key={tab}
                type="button"
                className={clsx(
                  'border px-[13px] text-[#444]',
                  tab === '삽입' ? '-mb-px h-[26px] border-[#d4d4d4] border-b-white bg-white pb-[3px] font-medium text-[#c9502e]' : 'border-transparent'
                )}
              >
                {tab}
              </button>
            ))}
          </div>
        </nav>
      </div>
      <div className="ml-[6px] flex w-[76px] shrink-0 flex-col border-t-4 border-[#f39b1c] bg-[#fff7ea] text-center">
        <div className="h-6 whitespace-nowrap leading-[22px] text-[#bf6a30]">그리기 도구</div>
        <button type="button" className="h-6 text-[#444]">서식</button>
      </div>
      <div className="relative flex-1 overflow-hidden">
        <HeaderArt />
        <div className="relative flex h-7 items-center justify-end gap-[19px] pr-[9px] text-[#666]">
          <button type="button" aria-label="도움말" className="text-sm font-bold">?</button>
          <button type="button" aria-label="리본 메뉴 표시 옵션">
            <svg width="13" height="11" viewBox="0 0 13 11" fill="none" stroke="currentColor"><path d="M.5 .5h12v10H.5zM.5 2.500h12M6.500 9V4.500M4.500 6.500l2 -2l2 2" /></svg>
          </button>
          <button type="button" aria-label="최소화">
            <svg width="10" height="10" viewBox="0 0 10 10"><path d="M0 6h9v2H0z" fill="currentColor" /></svg>
          </button>
          <button type="button" aria-label="최대화">
            <svg width="10" height="10" viewBox="0 0 10 10" fill="none" stroke="currentColor"><path d="M.5 1.500h9v8h-9z" /><path d="M0 1.500h10" strokeWidth="3" /></svg>
          </button>
          <button type="button" aria-label="닫기">
            <svg width="11" height="10" viewBox="0 0 11 10" stroke="currentColor" strokeWidth="2"><path d="M1 .5l9 9M10 .5l-9 9" /></svg>
          </button>
        </div>
        <div className="relative flex h-6 items-center justify-end gap-[7px] pr-[10px] text-[#777]">
          <Caret />
          <svg width="24" height="24" viewBox="0 0 24 24" aria-hidden="true">
            <path d="M0 0h24v24H0z" fill="#aeaeae" />
            <circle cx="12" cy="9" r="5.500" fill="#fff" />
            <path d="M3 24v-4q0 -5 6 -5q3 2 6 0q6 0 6 5v4z" fill="#fff" />
          </svg>
        </div>
      </div>
    </header>
  );
}

/* ---------- slide area ---------- */

const handles = [
  '-left-[4px] -top-[4px]',
  'left-1/2 -ml-[3px] -top-[4px]',
  '-right-[4px] -top-[4px]',
  '-left-[4px] top-1/2 -mt-[4px]',
  '-right-[4px] top-1/2 -mt-[4px]',
  '-left-[4px] -bottom-[4px]',
  'left-1/2 -ml-[3px] -bottom-[4px]',
  '-right-[4px] -bottom-[4px]',
];

function SelectedShape() {
  return (
    <div className="relative flex flex-1 border border-[#9a9a9a] bg-[#f1eff0]">
      <div className="flex-1 rounded-[20px] border border-[#3c5a94] bg-[#4472c4]" />
      <svg width="16" height="26" viewBox="0 0 16 26" className="absolute -top-[26px] left-1/2 -ml-2" fill="none" stroke="#a6a6a6">
        <circle cx="8" cy="7" r="5" stroke="#aaa" strokeWidth="4" />
        <circle cx="8" cy="7" r="5" stroke="#fff" strokeWidth="1.500" />
        <path d="M11 7h5l-2.500 3z" fill="#aaa" />
        <path d="M8.500 13v13" />
      </svg>
      {handles.map((place) => (
        <span key={place} className={clsx('absolute h-[7px] w-[7px] border border-[#8a8a8a] bg-white', place)} />
      ))}
      <span className="absolute -top-[4px] left-4 h-[7px] w-[7px] border border-[#8a7a3c] bg-[#ffe680]" />
    </div>
  );
}

function ScrollBar() {
  return (
    <div className="flex w-4 flex-col pb-6 pt-[2px] text-[#777]">
      <button type="button" aria-label="위로" className="flex h-[15px] w-[15px] items-center justify-center border border-[#ababab] bg-white">
        <Caret className="rotate-180" />
      </button>
      <div className="flex w-[15px] flex-1 flex-col justify-end bg-[#f3f3f3]">
        <div className="h-[83px] border border-[#ababab] bg-white" />
      </div>
      <button type="button" aria-label="아래로" className="flex h-[15px] w-[15px] items-center justify-center border border-[#ababab] bg-white">
        <Caret />
      </button>
      <button type="button" aria-label="이전 슬라이드" className="mt-1 flex w-[15px] justify-center">
        <svg width="8" height="10" viewBox="0 0 8 10" fill="currentColor"><path d="M4 0l4 4H0zM3 4h2v2H3zM4 5l4 4H0z" /></svg>
      </button>
      <button type="button" aria-label="다음 슬라이드" className="mt-2 flex w-[15px] justify-center">
        <svg width="8" height="10" viewBox="0 0 8 10" fill="currentColor"><path d="M0 0h8L4 4zM0 4h8L4 9z" /></svg>
      </button>
    </div>
  );
}

function Workspace() {
  return (
    <div className="flex flex-1 bg-linear-to-b from-[#fefefe] to-[#efefef] to-70% pb-[2px]">
      <aside className="flex w-[43px] shrink-0 flex-col items-center border-r border-[#cfcfcf] pr-1 pt-5 text-[#444]">
        <button type="button" aria-label="축소판 그림 확장">
          <svg width="6" height="9" viewBox="0 0 6 9" fill="none" stroke="#666" strokeWidth="2"><path d="M1 1l3.500 3.500L1 8" /></svg>
        </button>
        <span className="mt-4 rotate-180 whitespace-nowrap leading-4 [text-orientation:sideways] [writing-mode:vertical-rl]">축소판 그림</span>
      </aside>
      <main className="ml-[2px] flex min-w-0 flex-1 border-b border-[#cfcfcf]">
        <div className="flex flex-1 flex-col pb-[52px] pl-4 pr-4 pt-5">
          <p className="mb-[5px] pl-6 text-[20px] font-bold leading-6 text-[#f0060c]">모서리가 둥근 직사각형</p>
          <div className="flex flex-1 border border-[#c6c6c6] bg-[#f4ece1] pb-[33px] pl-[29px] pr-[21px] pt-[21px]">
            <SelectedShape />
          </div>
        </div>
        <ScrollBar />
      </main>
    </div>
  );
}

/* ---------- status bar ---------- */

function StatusBar() {
  const [zoom, setZoom] = useState(90);
  return (
    <footer className="flex h-[23px] shrink-0 items-center bg-[#d04727] pb-px pl-[7px] text-[#fce4dc]">
      <span>슬라이드 8/8</span>
      <button type="button" aria-label="맞춤법 검사" className="ml-5 mr-4">
        <svg width="15" height="13" viewBox="0 0 15 13" fill="none" stroke="currentColor">
          <path d="M7.500 12V2Q4 0 .5 1.500v9Q4 9.500 7.500 12q2 -1.500 4 -1.500M7.500 2q2 -1.500 4.500 -1" />
          <path d="M10 4l4 5M14 4l-4 5" strokeWidth="1.500" />
        </svg>
      </button>
      <button type="button">한국어</button>
      <button type="button" className="ml-auto flex items-center gap-1">
        <svg width="12" height="12" viewBox="0 0 12 12" fill="currentColor"><path d="M6 0l3 3H3zM0 4h12v1H0zM0 7h12v1H0zM0 10h9v1H0z" /></svg>
        슬라이드 노트
      </button>
      <button type="button" className="ml-[22px] flex items-center gap-1">
        <svg width="12" height="12" viewBox="0 0 12 12" fill="currentColor"><path d="M0 0h12v8H8l-3 4V8H0z" /></svg>
        메모
      </button>
      <div className="ml-[18px] flex self-stretch">
        <button type="button" aria-label="기본" className="flex w-[38px] items-center justify-center bg-[#b73b1c] text-white">
          <svg width="14" height="13" viewBox="0 0 14 13" fill="none" stroke="currentColor"><path d="M.5 .5h13v12H.5zM4.500 0v13M4.500 9.500h9" /><path d="M7.500 3.500h3v2h-3z" /><path d="M1 2.500h3M1 5.500h3M1 8.500h3" /></svg>
        </button>
        <button type="button" aria-label="여러 슬라이드" className="flex w-[38px] items-center justify-center">
          <svg width="14" height="13" viewBox="0 0 14 13" fill="currentColor"><path d="M0 0h6v5H0zM8 0h6v5H8zM0 8h6v5H0zM8 8h6v5H8z" /></svg>
        </button>
        <button type="button" aria-label="읽기용 보기" className="flex w-[38px] items-center justify-center">
          <svg width="13" height="13" viewBox="0 0 13 13" fill="none" stroke="currentColor"><path d="M6.500 12V1.500L5 .5H.5v10H5L6.500 12L8 10.500h4.500V.5H8L6.500 1.500M2 3.500h3M2 5.500h3M2 7.500h3M8 3.500h3M8 5.500h3M8 7.500h3" /></svg>
        </button>
        <button type="button" aria-label="슬라이드 쇼" className="flex w-[38px] items-center justify-center">
          <svg width="13" height="13" viewBox="0 0 13 13" fill="none" stroke="currentColor"><path d="M0 1h13" strokeWidth="2" /><path d="M1.500 2v5.500h10V2M6.500 8v4M3.500 12.500h6M4 5h5" /></svg>
        </button>
      </div>
      <button type="button" aria-label="축소" className="ml-1 mr-1">
        <svg width="7" height="8" viewBox="0 0 7 8"><path d="M0 3h7v2H0z" fill="#fff" /></svg>
      </button>
      <input
        type="range"
        aria-label="확대/축소"
        min="10"
        max="190"
        value={zoom}
        onChange={(e) => setZoom(Number(e.target.value))}
        className="h-3 w-[101px] appearance-none bg-[linear-gradient(#fce4dc,#fce4dc)] bg-[length:100%_1px] bg-center bg-no-repeat [&::-webkit-slider-thumb]:h-3 [&::-webkit-slider-thumb]:w-1 [&::-webkit-slider-thumb]:appearance-none [&::-webkit-slider-thumb]:bg-white"
      />
      <button type="button" aria-label="확대" className="ml-[3px]">
        <svg width="8" height="8" viewBox="0 0 8 8"><path d="M0 3h3V0h2v3h3v2H5v3H3V5H0z" fill="#fff" /></svg>
      </button>
      <span className="ml-[15px] w-12">{zoom} %</span>
      <button type="button" aria-label="창에 맞춤" className="mr-[19px]">
        <svg width="13" height="13" viewBox="0 0 13 13" fill="none" stroke="currentColor"><path d="M.5 .5h12v12H.5zM6.500 2v3M5 3.500l1.500 -1.500l1.500 1.500M6.500 11V8M5 9.500L6.500 11L8 9.500M2 6.500h3M3.500 5L2 6.500L3.500 8M11 6.500H8M9.500 5L11 6.500L9.500 8" /></svg>
      </button>
    </footer>
  );
}

export default function App() {
  return (
    <div className="flex min-h-screen flex-col overflow-hidden border border-b-0 border-[#a65a45] bg-white font-['Noto_Sans_CJK_KR','Noto_Sans',sans-serif] text-[13px] leading-5">
      <Header />
      <Ribbon />
      <Workspace />
      <StatusBar />
    </div>
  );
}
